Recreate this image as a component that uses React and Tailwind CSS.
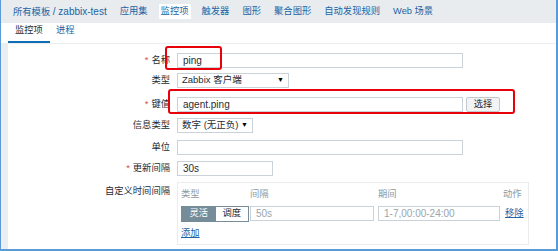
import React from 'react'

const font = 'font-["Liberation_Sans","Noto_Sans_CJK_SC",sans-serif]'

const navItems = ['应用集', '监控项', '触发器', '图形', '聚合图形', '自动发现规则', 'Web 场景']

function Label({ children, required }) {
  return (
    <div className="w-[163px] shrink-0 pr-[1px] text-right text-[9.3px] text-[#1f2c33]">
      {required && <span className="mr-[3px] text-[#d64e4e]">*</span>}
      {children}
    </div>
  )
}

function Input({ w, value, placeholder }) {
  return (
    <div
      className={`flex h-[15px] items-center border border-[#c9d2d9] bg-white px-[5px] text-[10px] text-[#1f2c33] ${w}`}
    >
      {value}
      {placeholder && <span className="text-[#9aa5ad]">{placeholder}</span>}
    </div>
  )
}

function Select({ w, value }) {
  return (
    <div
      className={`flex h-[15px] items-center justify-between border border-[#c9d2d9] bg-white pl-[4px] pr-[4px] text-[9.5px] text-[#1f2c33] ${w}`}
    >
      <span>{value}</span>
      <span className="text-[7px] text-black">▼</span>
    </div>
  )
}

export default function App() {
  return (
    <div className={`relative h-[251px] w-[558px] overflow-hidden border-b-2 border-l border-r-2 border-[#5b9bd5] bg-white ${font}`}>
      <div className="flex h-[23px] items-center gap-[9px] bg-[#e9ecef] pl-[11px] text-[#2263a3]">
        <span className="mr-[1px] px-[1px] text-[9.3px]">
          所有模板 <span className="text-[10px]">/ zabbix-test</span>
        </span>
        {navItems.map((item) => (
          <span
            key={item}
            className={`px-[2px] py-[1px] text-[9.3px] ${item === '监控项' ? 'bg-white' : ''}`}
          >
            {item}
          </span>
        ))}
      </div>

      <div className="flex h-[21px] items-end gap-[6px] border-b border-[#ebeef0] pl-[7px] text-[9.3px]">
        <div className="border-b-2 border-[#0f6fb4] px-[7px] pb-[3px] text-[#1f2c33]">监控项</div>
        <div className="pb-[5px] text-[#2263a3]">进程</div>
      </div>

      <div className="flex h-[206px]">
        <div className="w-[7px] bg-[#ebeef0]" />
        <div className="relative flex-1">
          <div className="mt-[9px] flex items-center gap-[6px]">
            <Label required>名称</Label>
            <Input w="w-[286px]" value="ping" />
          </div>
          <div className="mt-[5px] flex items-center gap-[6px]">
            <Label>类型</Label>
            <Select w="w-[112px]" value="Zabbix 客户端" />
          </div>
          <div className="mt-[9px] flex items-center gap-[6px]">
            <Label required>键值</Label>
            <Input w="w-[286px]" value="agent.ping" />
            <div className="ml-[-3px] flex h-[15px] w-[34px] items-center justify-center rounded-[2px] border border-[#c4c9cd] bg-[#f2f3f4] text-[9.3px] text-[#1f2c33]">
              选择
            </div>
          </div>
          <div className="mt-[6px] flex items-center gap-[6px]">
            <Label>信息类型</Label>
            <Select w="w-[76px]" value="数字 (无正负)" />
          </div>
          <div className="mt-[7px] flex items-center gap-[6px]">
            <Label>单位</Label>
            <Input w="w-[286px]" />
          </div>
          <div className="mt-[6px] flex items-center gap-[6px]">
            <Label required>更新间隔</Label>
            <Input w="w-[96px]" value="30s" />
          </div>
          <div className="mt-[6px] flex items-start gap-[6px]">
            <div className="pt-[3px]">
              <Label>自定义时间间隔</Label>
            </div>
            <div className="h-[63px] w-[352px] border border-[#ececec] px-[3px] pt-[5px] text-[9.3px]">
              <div className="flex text-[#8d9aa3]">
                <span className="w-[69px]">类型</span>
                <span className="w-[128px]">间隔</span>
                <span className="w-[125px]">期间</span>
                <span>动作</span>
              </div>
              <div className="mt-[4px] flex items-center">
                <div className="flex h-[16px] w-[68px] border border-[#768d99]">
                  <span className="flex w-[34px] items-center justify-center bg-[#768d99] text-white">灵活</span>
                  <span className="flex w-[33px] items-center justify-center bg-white text-[#1f2c33]">调度</span>
                </div>
                <div className="ml-[1px]">
                  <Input w="w-[124px]" placeholder="50s" />
                </div>
                <div className="ml-[4px]">
                  <Input w="w-[122px]" placeholder="1-7,00:00-24:00" />
                </div>
                <span className="ml-[5px] text-[#2263a3] underline">移除</span>
              </div>
              <div className="mt-[5px] text-[#2263a3] underline">添加</div>
            </div>
          </div>

          <div className="absolute left-[157px] top-[2px] h-[24px] w-[57px] rounded-[3px] border-2 border-[#e8000b]" />
          <div className="absolute left-[160px] top-[45px] h-[25px] w-[347px] rounded-[3px] border-2 border-[#e8000b]" />
        </div>
      </div>
    </div>
  )
}
